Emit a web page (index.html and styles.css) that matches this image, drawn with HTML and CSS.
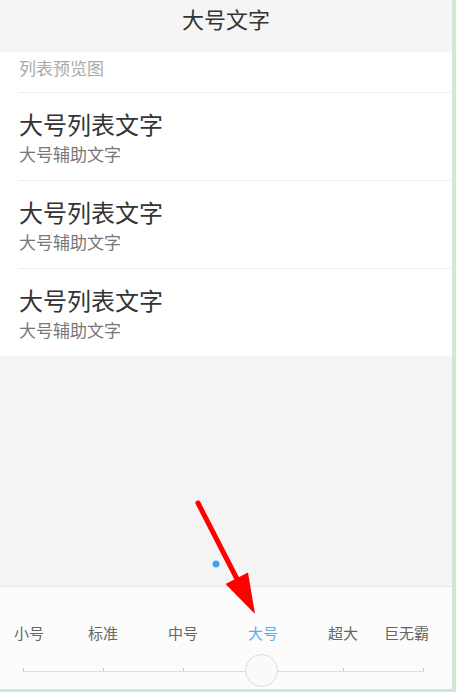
FILE: index.html
```html
<!DOCTYPE html>
<html lang="zh-CN">
<head>
<meta charset="utf-8">
<title>大号文字</title>
<link rel="stylesheet" href="styles.css">
</head>
<body>
<div class="screen">
  <div class="header">大号文字</div>
  <div class="list">
    <div class="caption">列表预览图</div>
    <div class="item">
      <div class="item-title">大号列表文字</div>
      <div class="item-sub">大号辅助文字</div>
    </div>
    <div class="item">
      <div class="item-title">大号列表文字</div>
      <div class="item-sub">大号辅助文字</div>
    </div>
    <div class="item">
      <div class="item-title">大号列表文字</div>
      <div class="item-sub">大号辅助文字</div>
    </div>
  </div>
  <div class="spacer"></div>
  <div class="panel">
    <div class="labels">
      <span class="lbl first">小号</span>
      <span class="lbl">标准</span>
      <span class="lbl">中号</span>
      <span class="lbl active">大号</span>
      <span class="lbl">超大</span>
      <span class="lbl last">巨无霸</span>
    </div>
    <div class="track">
      <div class="knob"></div>
    </div>
  </div>
  <svg class="overlay" width="452" height="689" viewBox="0 0 452 689">
    <circle cx="216" cy="564" r="3.5" fill="#3da5f5"/>
    <line x1="198" y1="503" x2="237" y2="579" stroke="#ff0000" stroke-width="5" stroke-linecap="round"/>
    <polygon points="225.5,584 248,572.5 255,614" fill="#ff0000"/>
  </svg>
</div>
</body>
</html>
```

FILE: styles.css
```css
html, body {
  margin: 0;
  padding: 0;
  background: #cfe8d0;
}
body {
  font-family: "Noto Sans CJK SC", "Noto Sans", sans-serif;
  width: 456px;
  height: 692px;
  overflow: hidden;
}
.screen {
  position: relative;
  width: 452px;
  height: 689px;
  background: #f4f4f4;
  display: flex;
  flex-direction: column;
  overflow: hidden;
}
.header {
  height: 52px;
  flex: none;
  background: #f5f5f5;
  text-align: center;
  line-height: 37px;
  font-size: 22px;
  color: #333;
}
.list {
  background: #fff;
  flex: none;
}
.caption {
  padding-left: 19px;
  height: 40px;
  line-height: 32px;
  font-size: 17px;
  color: #aaa;
}
.item {
  margin-left: 18px;
  border-top: 1px solid #eeeeee;
  padding: 17px 0 16px 1px;
}
.item-title {
  font-size: 24px;
  line-height: 28px;
  color: #333;
}
.item-sub {
  margin-top: 6px;
  font-size: 17px;
  line-height: 20px;
  color: #777;
}
.spacer {
  flex: 1;
}
.panel {
  flex: none;
  height: 102px;
  border-top: 1px solid #e8e8e8;
  background: #fcfcfc;
}
.labels {
  display: grid;
  grid-template-columns: 63px 80px 80px 80px 80px 1fr;
  padding-top: 35px;
  line-height: 22px;
  font-size: 15px;
  color: #666;
}
.lbl {
  text-align: center;
}
.lbl.first {
  text-align: left;
  padding-left: 14px;
}
.lbl.last {
  text-align: left;
  padding-left: 1px;
}
.lbl.active {
  color: #57b0f2;
}
.track {
  position: relative;
  margin: 10px 0 0 23px;
  width: 401px;
  height: 34px;
  background:
    linear-gradient(#dddddd, #dddddd) 0 17px / 100% 1px no-repeat,
    repeating-linear-gradient(to right, #c8c8c8 0 1px, transparent 1px 80px) 0 14px / 401px 3px no-repeat;
}
.knob {
  position: absolute;
  left: 222px;
  top: 0;
  width: 31px;
  height: 31px;
  border: 1.5px solid #dcdcdc;
  border-radius: 50%;
  background: #fafafa;
}
.overlay {
  position: absolute;
  left: 0;
  top: 0;
  pointer-events: none;
}
```
